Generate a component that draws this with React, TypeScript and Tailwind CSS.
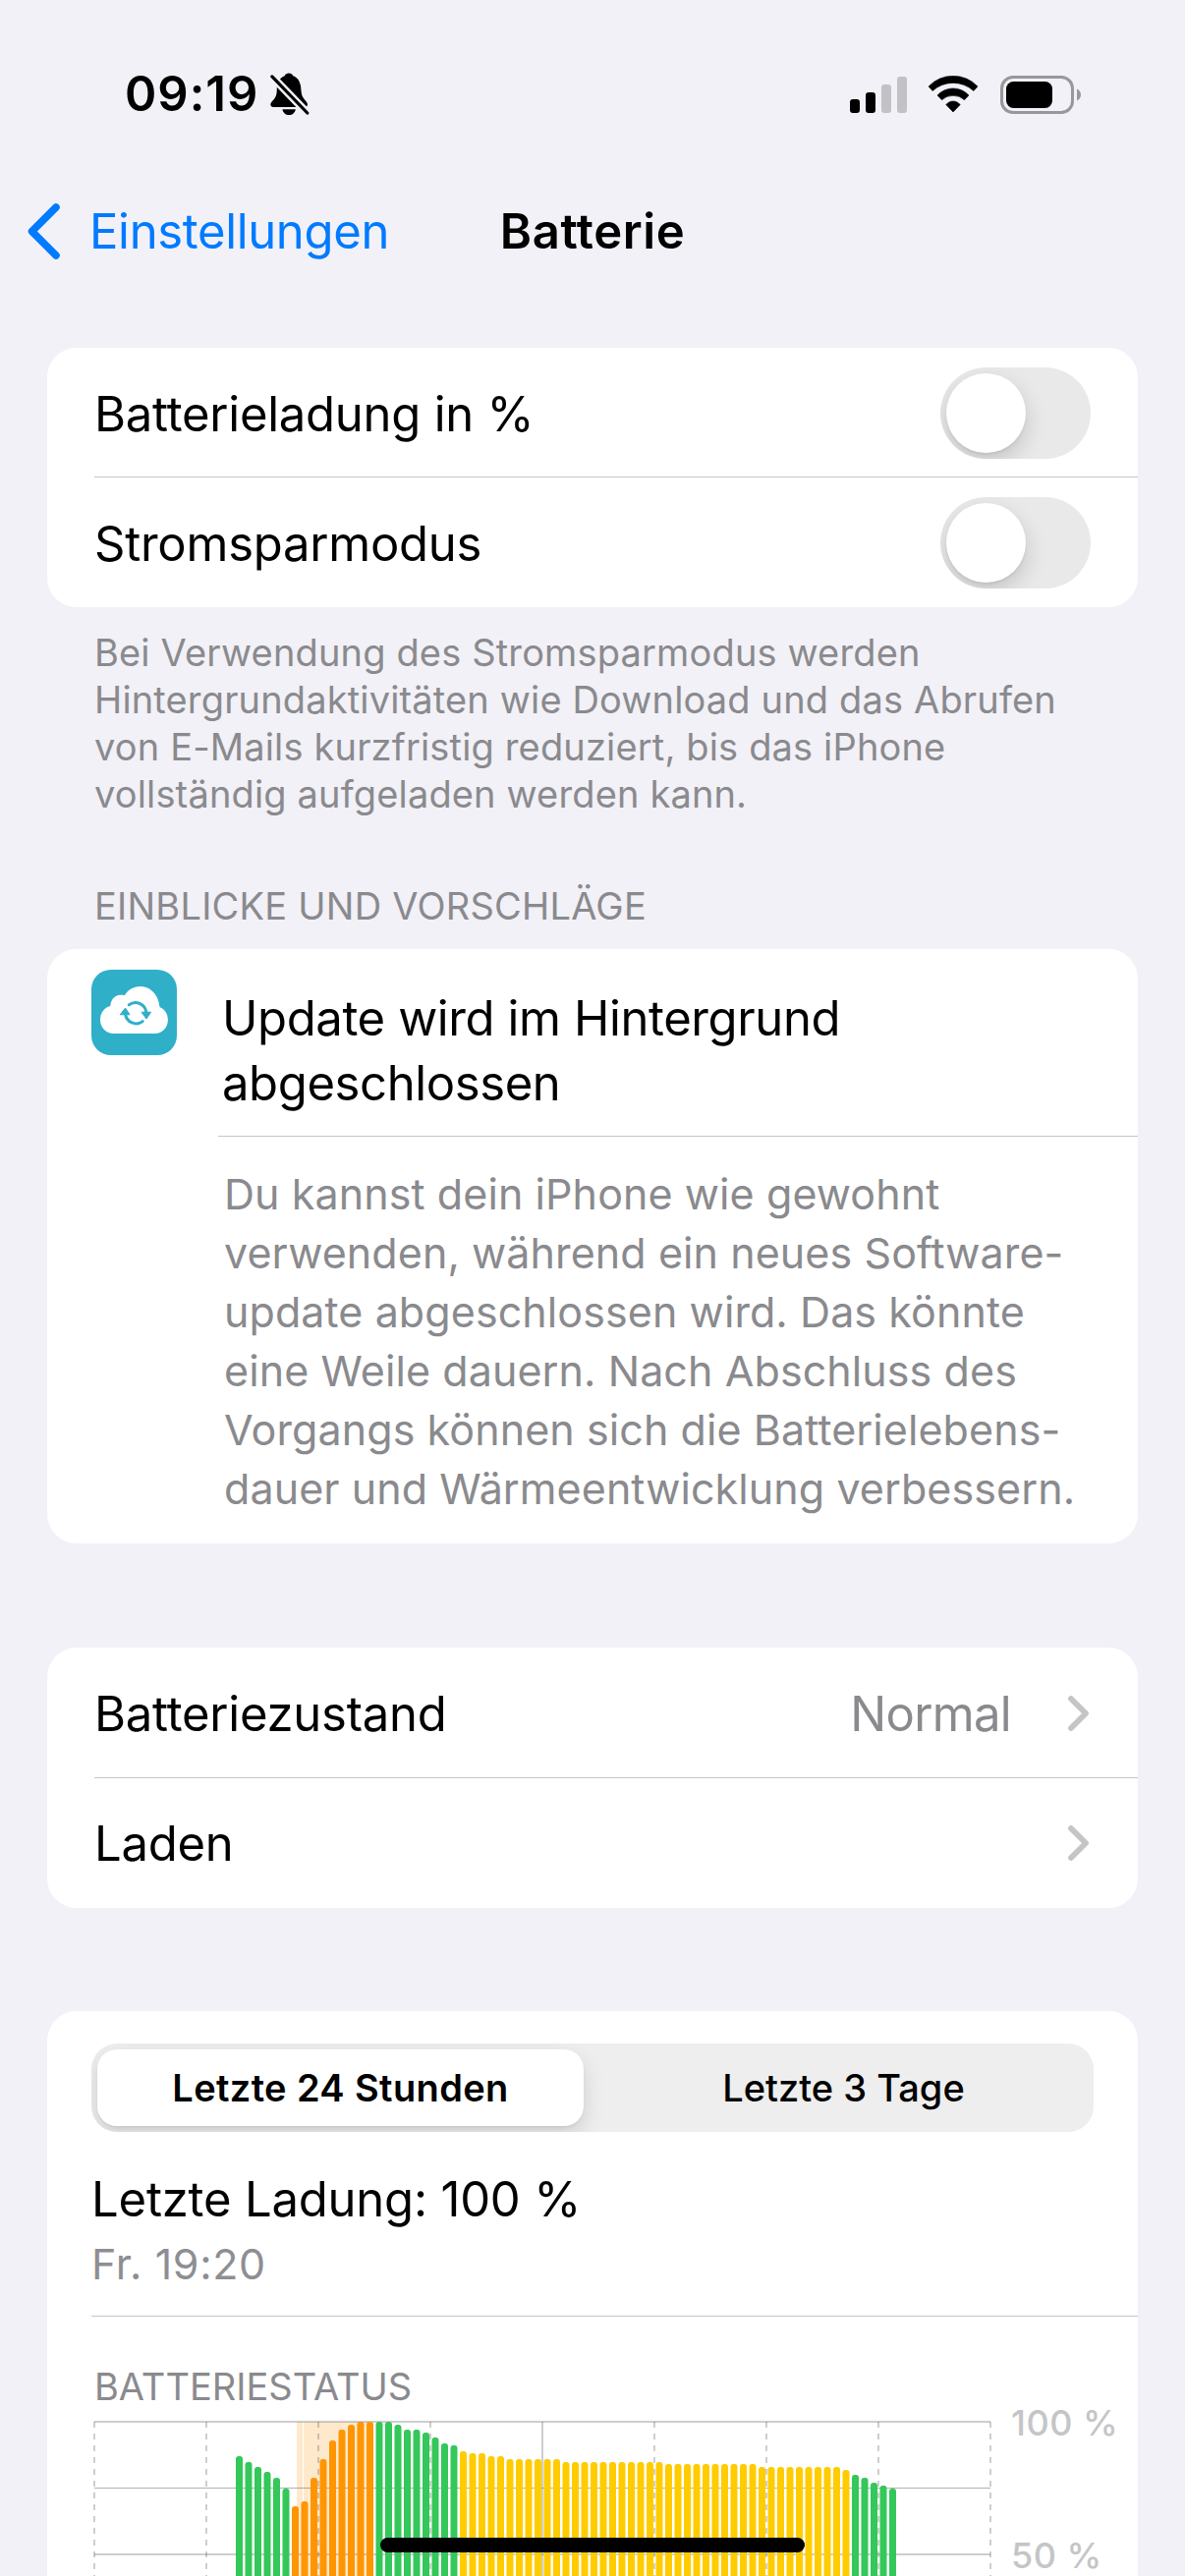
import type { ReactNode } from "react";

const GREEN = "#34c759";
const ORANGE = "#ff9500";
const YELLOW = "#ffcc00";

// bar tops, measured down from the 100 % line
const bars: { top: number; color: string }[] = [
  ...[35, 41, 46, 51, 57, 68].map((top) => ({ top, color: GREEN })),
  ...[86, 81, 57, 38, 19, 8, 3, 0, 0].map((top) => ({ top, color: ORANGE })),
  ...[0, 0, 3, 8, 8, 11, 16, 22, 24].map((top) => ({ top, color: GREEN })),
  ...[30, 32, 32, 35, 35].map((top) => ({ top, color: YELLOW })),
  ...Array(6).fill({ top: 38, color: YELLOW }),
  ...Array(11).fill({ top: 41, color: YELLOW }),
  ...Array(10).fill({ top: 43, color: YELLOW }),
  ...Array(9).fill({ top: 46, color: YELLOW }),
  { top: 49, color: YELLOW },
  ...[54, 57, 62, 65, 68].map((top) => ({ top, color: GREEN })),
];

function BellOff() {
  return (
    <svg width="40" height="44" viewBox="0 0 40 44">
      <path d="M19 .5C17 .5 15.3 1.5 14.8 3.2 9.5 5 6.8 10 6.8 16c0 6-.8 9-4.3 12.5C.5 30.5 0 32 .5 33.3c.4 1.2 1.3 1.6 2.5 1.6h32c2 0 3.2-1.4 3-2.9-.2-2-4-5-5.5-8.5C31.3 20 31.5 16 31 13.5 30 8 27.5 4.5 23.2 3.2 22.7 1.5 21 .5 19 .5Z" />
      <path d="M12.5 37.3h13.3c-.5 3.5-3.2 5.8-6.6 5.8s-6.3-2.3-6.7-5.8Z" />
      <path d="M0 1.9 40 43.3" stroke="#f2f1f7" strokeWidth="8" />
      <path d="M1.9 3.9 37.8 41" stroke="#000" strokeWidth="3.2" strokeLinecap="round" />
    </svg>
  );
}

function Signal() {
  return (
    <svg width="58" height="37" viewBox="0 0 58 37">
      <rect x="0" y="23" width="10" height="14" rx="3" />
      <rect x="16" y="16" width="10" height="21" rx="3" />
      <rect x="32" y="8" width="10" height="29" rx="3" fill="#c2c1c6" />
      <rect x="48" y="0" width="10" height="37" rx="3" fill="#c2c1c6" />
    </svg>
  );
}

function Wifi() {
  return (
    <svg width="52" height="38" viewBox="-26 0 52 38" stroke="#000" strokeWidth=".6" strokeLinejoin="round">
      <path d="M-25 11A34.4 34.4 0 0 1 25 11L20.9 15.5A31 31 0 0 0-20.9 15.5Z" />
      <path d="M-16 20A21.7 21.7 0 0 1 16 20L11.5 24.7A17.2 17.2 0 0 0-11.5 24.7Z" />
      <path d="M-7.2 29.6A9 9 0 0 1 7.2 29.6L0 37Z" />
    </svg>
  );
}

function Battery() {
  return (
    <svg width="82" height="39" viewBox="0 0 82 39">
      <rect x="1.5" y="1.5" width="72" height="36" rx="11.5" fill="none" stroke="#98979c" strokeWidth="3" />
      <rect x="6" y="6" width="47" height="27" rx="7.5" />
      <path d="M78 13.5c2.5 1 4 3.4 4 6s-1.5 5-4 6Z" fill="#98979c" />
    </svg>
  );
}

function CloudSync() {
  return (
    <svg width="87" height="87" viewBox="0 0 87 87" className="rounded-[20px] bg-[#30afc8]">
      <path
        d="M23 65C15 65 9 59 9 51c0-7 4-12.5 10.3-14 .2-6.5 4.7-11.3 10.2-11.3 2 0 3.5 0 4.5.3C37 20.5 43 17 49.6 17 60 17 68 25 69.5 38c5 2 8.4 7 8.4 13.3C77.9 59 72 65 64.5 65Z"
        fill="#fff"
      />
      <g stroke="#30afc8" strokeWidth="3" fill="none" strokeLinecap="round">
        <path d="M38.2 35.9A11 11 0 0 1 55.9 44" />
        <path d="M34.6 45A11 11 0 0 0 52.2 52.6" />
      </g>
      <path d="M51 43.2h9.6L56 50Z M29.2 45.8h9.8L34.6 39Z" fill="#30afc8" stroke="#30afc8" strokeLinejoin="round" />
    </svg>
  );
}

function Chevron() {
  return (
    <svg width="21" height="36" viewBox="0 0 21 36" fill="none" stroke="#c5c5c7" strokeWidth="5.8" strokeLinecap="round" strokeLinejoin="round">
      <path d="M3 3 18 18 3 33" />
    </svg>
  );
}

function Toggle() {
  return (
    <div className="h-[93px] w-[153px] overflow-hidden rounded-full bg-[#e9e9ea] p-[6px]">
      <div className="size-[81px] rounded-full bg-white shadow-[0_9px_22px_rgba(0,0,0,0.16),0_2px_3px_rgba(0,0,0,0.06)]" />
    </div>
  );
}

function Row({ label, className, children }: { label: string; className: string; children: ReactNode }) {
  return (
    <div className={`ml-12 flex items-center justify-between border-[#c6c6c8] ${className}`}>
      <span className="pt-[2px] text-[49px] leading-[60px] tracking-[-0.005em]">{label}</span>
      {children}
    </div>
  );
}

function Chart() {
  return (
    <svg width="916" height="158" viewBox="95 2464 916 158" className="shrink-0">
      <rect x="302" y="2465" width="6" height="157" fill="#ffe9cc" />
      <rect x="309" y="2465" width="68" height="157" fill="#ffe9cc" />
      <g fill="#3c3c43" fillOpacity=".25">
        <rect x="96" y="2464" width="912" height="2" />
        <rect x="96" y="2532" width="912" height="1" fillOpacity=".4" />
        <rect x="96" y="2599" width="912" height="2" />
      </g>
      {[96, 210, 324, 438, 552, 666, 780, 894, 1008].map((x) => (
        <path
          key={x}
          d={`M${x} 2465V2622`}
          stroke="#3c3c43"
          strokeOpacity=".25"
          strokeWidth="2"
          strokeDasharray={x === 552 ? undefined : "6 6"}
        />
      ))}
      {bars.map((b, i) => (
        <rect key={i} x={240 + i * 9.5} y={2465 + b.top} width="7" height="200" rx="3" fill={b.color} />
      ))}
    </svg>
  );
}

export default function App() {
  return (
    <div className="relative h-[2622px] w-[1206px] overflow-hidden bg-[#f2f1f7] font-['Inter',sans-serif] text-black">
      <header className="mt-[66px] flex h-[60px] items-center justify-between pr-[106px] pl-[127px]">
        <div className="flex items-center gap-3">
          <span className="text-[49px] leading-[60px] font-semibold tracking-[0.02em]">09:19</span>
          <BellOff />
        </div>
        <div className="flex items-center">
          <Signal />
          <div className="ml-[21px]">
            <Wifi />
          </div>
          <div className="ml-[22px]">
            <Battery />
          </div>
        </div>
      </header>

      <nav className="mt-[79px] grid h-[60px] grid-cols-[1fr_auto_1fr] items-center text-[49px] leading-[59px]">
        <div className="flex items-center gap-[30px] pl-7 tracking-[-0.007em] text-[#007aff]">
          <svg width="33" height="57" viewBox="0 0 33 57" fill="none" stroke="#007aff" strokeWidth="7.5" strokeLinecap="round" strokeLinejoin="round">
            <path d="M29 4 4.5 28.5 29 53" />
          </svg>
          <span className="pt-px">Einstellungen</span>
        </div>
        <h1 className="pt-px font-semibold tracking-[0.012em]">Batterie</h1>
      </nav>

      <main className="mx-12">
        <section className="mt-[89px] rounded-[30px] bg-white">
          <Row label="Batterieladung in %" className="h-[132px] border-b pt-[2px] pr-12">
            <Toggle />
          </Row>
          <Row label="Stromsparmodus" className="h-[132px] pt-px pr-12">
            <Toggle />
          </Row>
        </section>
        <p className="mt-[22px] ml-12 text-[38px] leading-[48px] tracking-[0.004em] whitespace-nowrap text-[#8a8a8e]">
          Bei Verwendung des Stromsparmodus werden
          <br />
          Hintergrundaktivitäten wie Download und das Abrufen
          <br />
          von E-Mails kurzfristig reduziert, bis das iPhone
          <br />
          vollständig aufgeladen werden kann.
        </p>

        <h2 className="mt-[66px] ml-12 text-[38px] leading-[48px] tracking-[0.006em] text-[#8a8a8e]">
          EINBLICKE UND VORSCHLÄGE
        </h2>
        <section className="mt-5 flex h-[605px] rounded-[30px] bg-white">
          <div className="w-[174px] shrink-0 pt-[21px] pl-[45px]">
            <CloudSync />
          </div>
          <div className="flex-1">
            <h3 className="border-b border-[#c6c6c8] pt-[38px] pb-5 pl-1 text-[49px] leading-[66px] tracking-[-0.008em]">
              Update wird im Hintergrund
              <br />
              abgeschlossen
            </h3>
            <p className="pt-7 pl-1.5 text-[43px] leading-[60px] tracking-[0.002em] whitespace-nowrap text-[#8a8a8e]">
              Du kannst dein iPhone wie gewohnt
              <br />
              verwenden, während ein neues Software-
              <br />
              update abgeschlossen wird. Das könnte
              <br />
              eine Weile dauern. Nach Abschluss des
              <br />
              Vorgangs können sich die Batterielebens-
              <br />
              dauer und Wärmeentwicklung verbessern.
            </p>
          </div>
        </section>

        <section className="mt-[106px] rounded-[30px] bg-white">
          <Row label="Batteriezustand" className="h-[133px] border-b pt-px pr-[50px]">
            <div className="flex items-center gap-[58px]">
              <span className="pt-[2px] text-[49px] leading-[60px] tracking-[-0.014em] text-[#8a8a8e]">Normal</span>
              <Chevron />
            </div>
          </Row>
          <Row label="Laden" className="h-[132px] pr-[50px]">
            <Chevron />
          </Row>
        </section>

        <section className="mt-[105px] h-[700px] rounded-t-[30px] bg-white pt-[33px]">
          <div className="mr-[45px] ml-[45px] grid h-[90px] grid-cols-[495px_1fr] overflow-hidden rounded-[26px] bg-[#eeeeee] p-[6px] text-center text-[38px] leading-[78px]">
            <div className="rounded-[20px] bg-white font-semibold tracking-[0.01em] shadow-[0_9px_22px_rgba(0,0,0,0.13),0_2px_3px_rgba(0,0,0,0.06)]">
              Letzte 24 Stunden
            </div>
            <div className="pl-4 font-medium">Letzte 3 Tage</div>
          </div>
          <div className="mt-[39px] ml-[45px] border-b border-[#c6c6c8] pb-[23px]">
            <p className="text-[49px] leading-[60px] tracking-[-0.004em]">Letzte Ladung: 100 %</p>
            <p className="mt-[5px] text-[43px] leading-[60px] tracking-[0.015em] text-[#8e8e93]">Fr. 19:20</p>
          </div>
          <h2 className="mt-[47px] ml-12 text-[38px] leading-[48px] text-[#8a8a8e]">BATTERIESTATUS</h2>
          <div className="mt-[11px] ml-[47px] flex">
            <Chart />
            <div className="-mt-4 flex flex-col gap-[99px] pl-[18px] text-[36px] leading-[36px] font-medium tracking-[0.014em] whitespace-nowrap text-[#c5c5c7]">
              <span>100 %</span>
              <span>50 %</span>
            </div>
          </div>
        </section>
      </main>

      {/* home indicator */}
      <div className="absolute top-[2583px] left-[387px] h-[15px] w-[432px] rounded-full bg-black" />
    </div>
  );
}
